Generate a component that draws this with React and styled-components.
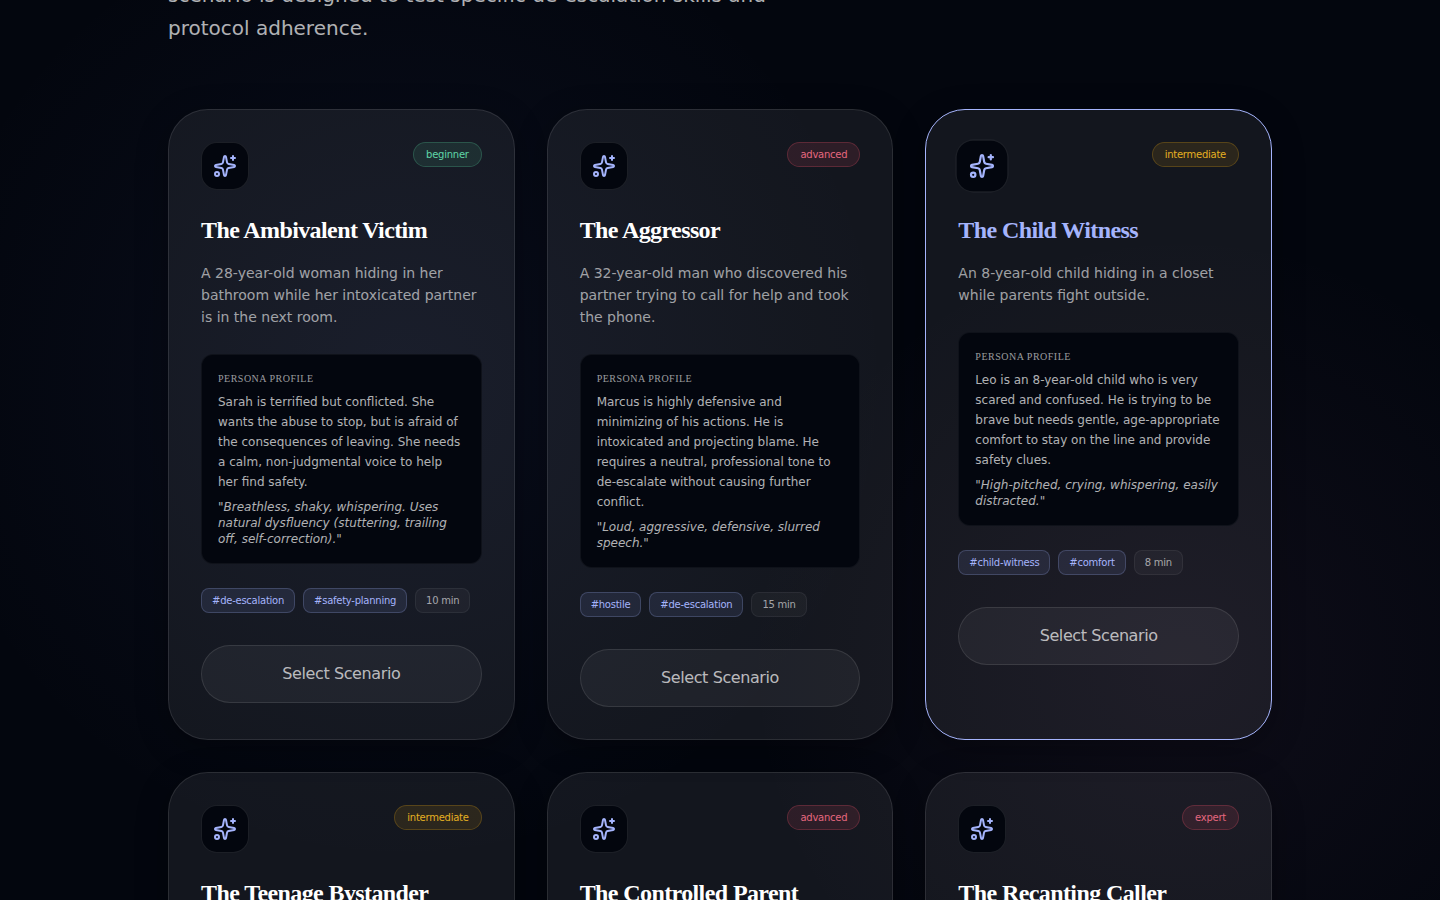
import React from 'react';
import styled, { createGlobalStyle } from 'styled-components';

const scenarios = [
  {
    title: 'The Ambivalent Victim',
    level: 'beginner',
    text: 'A 28-year-old woman hiding in her bathroom while her intoxicated partner is in the next room.',
    persona:
      'Sarah is terrified but conflicted. She wants the abuse to stop, but is afraid of the consequences of leaving. She needs a calm, non-judgmental voice to help her find safety.',
    voice: 'Breathless, shaky, whispering. Uses natural dysfluency (stuttering, trailing off, self-correction).',
    tags: ['de-escalation', 'safety-planning'],
    time: 10,
  },
  {
    title: 'The Aggressor',
    level: 'advanced',
    text: 'A 32-year-old man who discovered his partner trying to call for help and took the phone.',
    persona:
      'Marcus is highly defensive and minimizing of his actions. He is intoxicated and projecting blame. He requires a neutral, professional tone to de-escalate without causing further conflict.',
    voice: 'Loud, aggressive, defensive, slurred speech.',
    tags: ['hostile', 'de-escalation'],
    time: 15,
  },
  {
    title: 'The Child Witness',
    level: 'intermediate',
    active: true,
    text: 'An 8-year-old child hiding in a closet while parents fight outside.',
    persona:
      'Leo is an 8-year-old child who is very scared and confused. He is trying to be brave but needs gentle, age-appropriate comfort to stay on the line and provide safety clues.',
    voice: 'High-pitched, crying, whispering, easily distracted.',
    tags: ['child-witness', 'comfort'],
    time: 8,
  },
  { title: 'The Teenage Bystander', level: 'intermediate' },
  { title: 'The Controlled Parent', level: 'advanced' },
  { title: 'The Recanting Caller', level: 'expert' },
];

const levels = {
  beginner: { text: '#5fd6a8', rgb: '82, 200, 150' },
  intermediate: { text: '#e6b022', rgb: '220, 160, 20' },
  advanced: { text: '#e5677f', rgb: '235, 80, 105' },
  expert: { text: '#e5677f', rgb: '235, 80, 105' },
};

const SparkleIcon = () => (
  <svg
    width='24'
    height='24'
    viewBox='0 0 24 24'
    fill='none'
    stroke='currentColor'
    strokeWidth='2'
    strokeLinecap='round'
    strokeLinejoin='round'
    aria-hidden='true'
  >
    <path d='M11.017 2.814a1 1 0 0 1 1.966 0l1.051 5.558a2 2 0 0 0 1.594 1.594l5.558 1.051a1 1 0 0 1 0 1.966l-5.558 1.051a2 2 0 0 0-1.594 1.594l-1.051 5.558a1 1 0 0 1-1.966 0l-1.051-5.558a2 2 0 0 0-1.594-1.594l-5.558-1.051a1 1 0 0 1 0-1.966l5.558-1.051a2 2 0 0 0 1.594-1.594z' />
    <path d='M20 2v4' />
    <path d='M22 4h-4' />
    <circle cx='4' cy='20' r='2' />
  </svg>
);

const ScenarioCard = ({ title, level, active, text, persona, voice, tags, time }) => (
  <Card $active={active}>
    <CardTop>
      <IconBox $active={active}>
        <SparkleIcon />
      </IconBox>
      <Badge $level={levels[level]}>{level}</Badge>
    </CardTop>
    <Title $active={active}>{title}</Title>
    {text ? (
      <>
        <Description>{text}</Description>
        <Persona>
          <PersonaLabel>Persona Profile</PersonaLabel>
          <PersonaText>{persona}</PersonaText>
          <PersonaVoice>{`"${voice}"`}</PersonaVoice>
        </Persona>
        <Tags>
          {tags.map((tag) => (
            <Tag key={tag}>{`#${tag}`}</Tag>
          ))}
          <Time>{`${time} min`}</Time>
        </Tags>
        <SelectButton type='button'>Select Scenario</SelectButton>
      </>
    ) : null}
  </Card>
);

const App = () => (
  <>
    <GlobalStyle />
    <Page>
      <Container>
        <Intro>scenario is designed to test specific de-escalation skills and protocol adherence.</Intro>
        <Grid>
          {scenarios.map((item) => (
            <ScenarioCard key={item.title} {...item} />
          ))}
        </Grid>
      </Container>
    </Page>
  </>
);

const GlobalStyle = createGlobalStyle`
  * {
    box-sizing: border-box;
    margin: 0;
  }
  body {
    background: #03060e;
    font-family: 'DejaVu Sans', sans-serif;
    -webkit-font-smoothing: antialiased;
  }
`;

const Page = styled.main`
  height: 100vh;
  overflow: hidden;
  background:
    radial-gradient(circle at 28% 42%, rgba(100, 120, 220, 0.07), transparent 42%),
    radial-gradient(circle at 82% 74%, rgba(170, 110, 170, 0.07), transparent 32%),
    #03060e;
`;

const Container = styled.div`
  max-width: 1200px;
  margin: 0 auto;
  padding: 0 48px;
`;

/* the top of the intro is scrolled out of view */
const Intro = styled.p`
  max-width: 672px;
  margin: -21px 0 64px;
  color: rgba(255, 255, 255, 0.7);
  font-size: 20px;
  line-height: 33px;
`;

const Grid = styled.div`
  display: grid;
  grid-template-columns: repeat(3, minmax(0, 1fr));
  gap: 32px;
`;

const Card = styled.article`
  padding: 32px;
  border: 1px solid ${({ $active }) => ($active ? '#a5b4fc' : 'rgba(255, 255, 255, 0.1)')};
  border-radius: 40px;
  background: rgba(255, 255, 255, 0.065);
  box-shadow: 0 8px 32px rgba(0, 0, 0, 0.3);
`;

const CardTop = styled.div`
  display: flex;
  justify-content: space-between;
  align-items: flex-start;
  margin-bottom: 24px;
`;

const IconBox = styled.div`
  display: flex;
  align-items: center;
  justify-content: center;
  width: 48px;
  height: 48px;
  border: 1px solid rgba(255, 255, 255, 0.1);
  border-radius: 16px;
  background: #03060e;
  color: #a5b4fc;
  transform: ${({ $active }) => ($active ? 'scale(1.1)' : 'none')};
`;

const Badge = styled.span`
  padding: 4px 12px;
  border: 1px solid ${({ $level }) => `rgba(${$level.rgb}, 0.25)`};
  border-radius: 999px;
  background: ${({ $level }) => `rgba(${$level.rgb}, 0.12)`};
  color: ${({ $level }) => $level.text};
  font-size: 10px;
  line-height: 15px;
  letter-spacing: -0.025em;
`;

const Title = styled.h3`
  color: ${({ $active }) => ($active ? '#a5b4fc' : '#fff')};
  font-family: 'Liberation Serif', serif;
  font-size: 24px;
  font-weight: 700;
  line-height: 32px;
  letter-spacing: -0.025em;
`;

const Description = styled.p`
  margin: 16px 0 26px;
  color: rgba(255, 255, 255, 0.6);
  font-size: 14px;
  line-height: 22px;
`;

const Persona = styled.section`
  margin-bottom: 24px;
  padding: 16px;
  border: 1px solid rgba(255, 255, 255, 0.05);
  border-radius: 12px;
  background: #03060e;
`;

const PersonaLabel = styled.h4`
  margin-bottom: 6px;
  color: rgba(255, 255, 255, 0.6);
  font-family: 'Liberation Serif', serif;
  font-size: 10px;
  font-weight: 400;
  line-height: 15px;
  letter-spacing: 0.05em;
  text-transform: uppercase;
`;

const PersonaText = styled.p`
  margin-bottom: 7px;
  color: rgba(255, 255, 255, 0.7);
  font-size: 12px;
  line-height: 20px;
`;

const PersonaVoice = styled.p`
  color: rgba(255, 255, 255, 0.7);
  font-size: 12px;
  font-style: italic;
  line-height: 16px;
`;

const Tags = styled.div`
  display: flex;
  flex-wrap: wrap;
  gap: 8px;
  margin-bottom: 32px;
`;

const Tag = styled.span`
  padding: 4px 10px;
  border: 1px solid rgba(165, 180, 252, 0.22);
  border-radius: 8px;
  background: rgba(150, 160, 248, 0.11);
  color: #a5b4fc;
  font-size: 10px;
  line-height: 15px;
  letter-spacing: -0.025em;
`;

const Time = styled(Tag)`
  border-color: rgba(255, 255, 255, 0.06);
  background: rgba(255, 255, 255, 0.04);
  color: rgba(255, 255, 255, 0.6);
`;

const SelectButton = styled.button`
  display: block;
  width: 100%;
  padding: 16px;
  border: 1px solid rgba(255, 255, 255, 0.1);
  border-radius: 999px;
  background: rgba(255, 255, 255, 0.05);
  color: rgba(255, 255, 255, 0.7);
  font-family: inherit;
  font-size: 16px;
  line-height: 24px;
  letter-spacing: -0.025em;
  cursor: pointer;
`;

export default App;
